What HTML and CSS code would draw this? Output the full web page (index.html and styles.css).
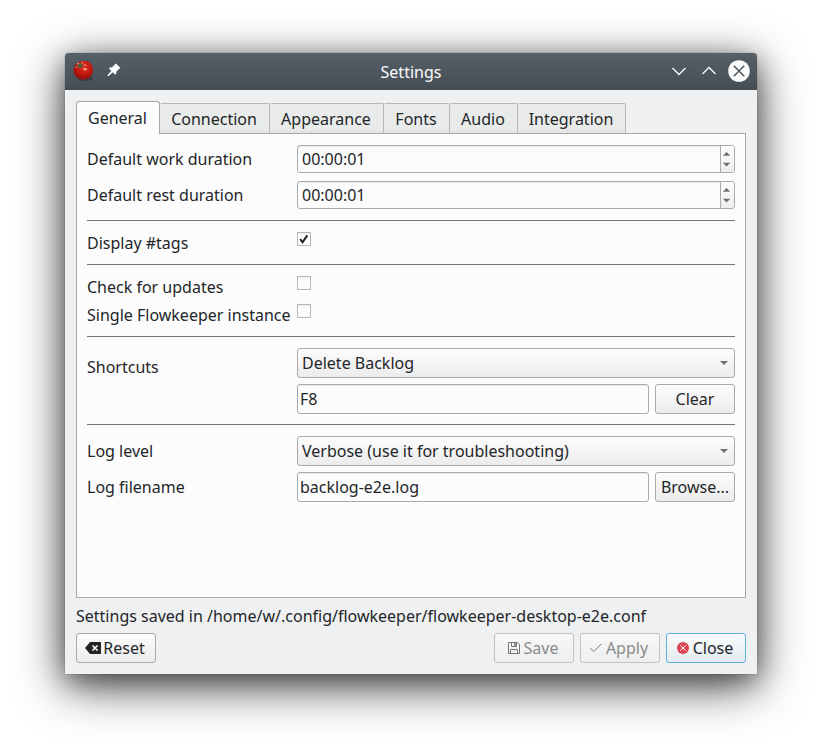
FILE: index.html
```html
<!DOCTYPE html>
<html lang="en">
<head>
<meta charset="utf-8">
<title>Settings</title>
<link rel="stylesheet" href="styles.css">
</head>
<body>
<main class="window">
  <header class="titlebar">
    <div class="side">
      <svg class="tomato" width="22" height="22" viewBox="0 0 22 22">
        <defs>
          <radialGradient id="skin" cx="55%" cy="35%" r="65%">
            <stop offset="0" stop-color="#e2301c"/><stop offset=".55" stop-color="#c41a0f"/><stop offset="1" stop-color="#8e0d08"/>
          </radialGradient>
        </defs>
        <ellipse cx="12.500" cy="18.500" rx="7.500" ry="2.600" fill="#30363a" opacity=".7"/>
        <path d="M10.500 1C15.500.2 20 3.500 20 9.800c0 6-4 9.700-9.500 9.700S.6 15.800.6 10.200C.6 4.800 4.500 1.200 10.500 1z" fill="url(#skin)"/>
        <path d="M2.500 6.800l2-2.600 2-.8 1.800-.9.600 1.500 2 .6-1.400 1.200 1 2.400-2.300-1-1.600 1.700-1.200-1.900z" fill="#7d4a30"/>
        <path d="M5.200 5.200l2.600-.9 1.300 1.300-1.600 1.300-1.900-.3z" fill="#3f6a38"/>
        <circle cx="5.300" cy="3.600" r=".9" fill="#e3b9a4"/><circle cx="9.300" cy="2.800" r=".8" fill="#e3b9a4"/><circle cx="3.200" cy="7.200" r=".7" fill="#dfa48f"/>
        <ellipse cx="12.200" cy="9.200" rx="1.900" ry="1" fill="#f6b1a5"/><circle cx="11.900" cy="5" r=".9" fill="#ef9385"/>
      </svg>
      <svg class="pin" width="14" height="14" viewBox="0 0 14 14" fill="#fcfcfc">
        <path d="M9 .5L13.500 5l-1.500 1-2.900 2.900.3 1.600-1.200 1.200-2.400-2.400L1.700 13H.6v-1.100l3.800-4L2 5.500l1.200-1.200 1.700.200L7.800 1.600z"/>
      </svg>
    </div>
    <h1>Settings</h1>
    <div class="side controls">
      <svg width="16" height="16" viewBox="0 0 16 16"><path d="M1.500 5L8 11.500 14.500 5"/></svg>
      <svg width="16" height="16" viewBox="0 0 16 16"><path d="M1.500 11L8 4.500 14.500 11"/></svg>
      <svg class="quit" width="22" height="22" viewBox="0 0 22 22"><circle cx="11" cy="11" r="10.800"/><path d="M5.800 5.800l10.400 10.400M16.200 5.800L5.800 16.200"/></svg>
    </div>
  </header>
  <div class="body">
    <nav class="tabs">
      <span class="tab active">General</span><span class="tab connection">Connection</span><span class="tab appearance">Appearance</span><span class="tab fonts">Fonts</span><span class="tab audio">Audio</span><span class="tab integration">Integration</span>
    </nav>
    <div class="panel">
      <section>
        <div class="row"><label>Default work duration</label>
          <div class="spin"><span>00:00:01</span><svg width="14" height="26" viewBox="0 0 14 26"><path d="M2 9.500L6 5.500l4 4zM2 17h8l-4 4z"/></svg></div></div>
        <div class="row"><label>Default rest duration</label>
          <div class="spin"><span>00:00:01</span><svg width="14" height="26" viewBox="0 0 14 26"><path d="M2 9.500L6 5.500l4 4zM2 17h8l-4 4z"/></svg></div></div>
      </section>
      <section>
        <div class="row check"><label>Display #tags</label><span class="box"><svg width="12" height="12" viewBox="0 0 12 12"><path d="M2.200 6l2.300 3.300L9.300 2.400"/></svg></span></div>
      </section>
      <section>
        <div class="row check"><label>Check for updates</label><span class="box"></span></div>
        <div class="row check"><label>Single Flowkeeper instance</label><span class="box"></span></div>
      </section>
      <section>
        <div class="row"><label class="low">Shortcuts</label>
          <div class="combo"><span>Delete Backlog</span><svg width="8" height="4" viewBox="0 0 8 4"><path d="M0 0h8L4 4z"/></svg></div></div>
        <div class="row"><label></label><div class="field">F8</div><button>Clear</button></div>
      </section>
      <section>
        <div class="row"><label>Log level</label>
          <div class="combo"><span>Verbose (use it for troubleshooting)</span><svg width="8" height="4" viewBox="0 0 8 4"><path d="M0 0h8L4 4z"/></svg></div></div>
        <div class="row"><label>Log filename</label><div class="field">backlog-e2e.log</div><button>Browse...</button></div>
      </section>
    </div>
    <p class="status">Settings saved in /home/w/.config/flowkeeper/flowkeeper-desktop-e2e.conf</p>
    <footer>
      <button class="reset"><svg width="16" height="12" viewBox="0 0 16 12"><path d="M0 6l5-6h11v12H5z" fill="#232629"/><path d="M7.500 3.500l5 5m0-5l-5 5" stroke="#fcfcfc" stroke-width="1.600"/></svg>Reset</button>
      <button class="save" disabled><svg width="12" height="12" viewBox="0 0 12 12" fill="none" stroke="#75777a"><path d="M.5.5h9l2 2v9H.5zM3.500.5v4h5v-4M2.500 11.500v-4h7v4"/><path d="M7 1v3" stroke-width="1.500"/></svg>Save</button>
      <button class="apply" disabled><svg width="12" height="10" viewBox="0 0 12 10" fill="none" stroke="#75777a"><path d="M.4 5.300l3.300 3.300L11.600.7"/></svg>Apply</button>
      <button class="close"><svg width="12" height="12" viewBox="0 0 12 12"><circle cx="6" cy="6" r="6" fill="#da4453"/><path d="M3.300 3.300l5.400 5.400m0-5.400l-5.400 5.400" stroke="#fcfcfc"/></svg>Close</button>
    </footer>
  </div>
</main>
</body>
</html>
```
FILE: styles.css
```css
* { box-sizing: border-box; }
body {
  margin: 0;
  padding: 53px 65px 77px;
  background: #fff;
  color: #232629;
  font: 16px/22px "Noto Sans", sans-serif;
  overflow: hidden;
}
svg { display: block; flex: none; }
.window {
  width: 692px;
  height: 621px;
  border-radius: 4px 4px 0 0;
  background: #eff0f1;
  box-shadow: 0 0 1px rgba(0, 0, 0, .6), 0 12px 48px rgba(0, 0, 0, .7), 0 6px 24px rgba(0, 0, 0, .35);
}
.titlebar {
  display: flex;
  align-items: center;
  height: 37px;
  padding: 0 7px 2px;
  border-radius: 4px 4px 0 0;
  background: linear-gradient(#566069, #454d54);
  color: #fcfcfc;
}
.side { display: flex; align-items: center; width: 90px; }
.tomato { margin: 1px 12px 0 1px; }
.pin { margin-bottom: 1px; }
h1 { flex: 1; margin: 2px 0 0; font-size: 16px; font-weight: 400; text-align: center; }
.controls { justify-content: flex-end; gap: 14px; }
.controls path { fill: none; stroke: #fcfcfc; stroke-width: 1.3; }
.controls .quit { margin-left: -3px; }
.quit circle { fill: #fcfcfc; }
.controls .quit path { stroke: #4b545c; stroke-width: 1.5; }
.body { padding: 11px 11px 0; }
.tabs { display: flex; align-items: flex-end; height: 33px; margin-bottom: -1px; }
.tab {
  height: 31px;
  padding: 4px 1px 0 0;
  border: 1px solid #b5b7b8;
  border-left: 0;
  border-bottom-color: #a6a8a9;
  border-radius: 2px 2px 0 0;
  background: linear-gradient(#e9ebea 85%, #e2e4e3);
  text-align: center;
}
.tab.active {
  position: relative;
  width: 84px;
  height: 33px;
  padding-top: 5px;
  border: 1px solid #a6a8a9;
  border-bottom: 0;
  border-radius: 3px 3px 0 0;
  background: #fcfcfc;
}
.connection { width: 110px; }
.appearance { width: 114px; }
.fonts { width: 66px; }
.audio { width: 68px; }
.integration { width: 108px; }
.panel {
  height: 465px;
  padding: 10px;
  border: 1px solid #a6a8a9;
  background: #fcfcfc;
}
section { display: flex; flex-direction: column; gap: 6px; padding-bottom: 10px; }
section + section { padding-top: 11px; border-top: 1px solid #727476; }
.row { display: flex; align-items: center; height: 30px; }
.row label { flex: none; width: 210px; white-space: nowrap; }
.row label.low { padding-top: 8px; }
.row.check { height: 22px; align-items: flex-start; }
.box { width: 14px; height: 14px; border: 1px solid #b6b7b8; background: #fcfcfc; box-shadow: inset 0 1px #eeefef; }
.box path { fill: none; stroke: #1a1c1e; stroke-width: 1.9; }
.spin, .combo, .field {
  display: flex;
  align-items: center;
  flex: 1;
  height: 30px;
  border: 1px solid #a8aaab;
  border-radius: 3px;
}
.spin { height: 28px; justify-content: space-between; padding-left: 4px; overflow: hidden; box-shadow: inset 0 1px #ececec; }
.spin svg { box-sizing: content-box; border-left: 1px solid #a8aaab; background: linear-gradient(#fcfcfc, #eee); width: 13px; }
.spin path, .combo path { fill: #6c6e70; }
.combo { justify-content: space-between; padding: 0 6px 0 4px; background: linear-gradient(#fcfcfc, #ececec); }
.field { padding-left: 2px; box-shadow: inset 0 1px #ececec; }
button {
  display: flex;
  align-items: center;
  justify-content: center;
  width: 80px;
  height: 30px;
  padding: 0;
  border: 1px solid #a8aaab;
  border-radius: 3px;
  background: linear-gradient(#fcfcfc, #ececec);
  color: #232629;
  font: inherit;
}
.row button { margin-left: 6px; }
.status { margin: 7px 0 6px; white-space: nowrap; }
footer { display: flex; gap: 6px; }
footer button { padding-right: 2px; }
.reset { gap: 2px; margin-right: auto; }
.save, .apply { gap: 4px; border-color: #c0c2c3; background: linear-gradient(#f8f8f8, #eee); color: #898b8d; }
.close { gap: 4px; border-color: #5cb3df; background: linear-gradient(#fcfcfc, #e3eaef); }
```
